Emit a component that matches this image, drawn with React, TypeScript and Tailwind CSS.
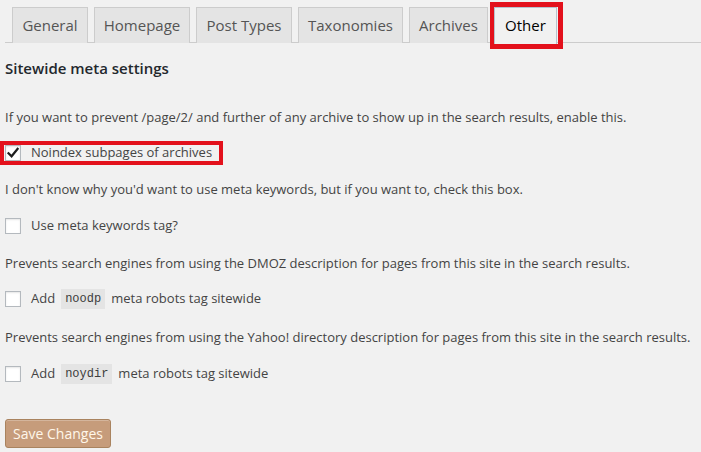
import React from "react";

const tabs = [
  { label: "General", w: "w-[76px]" },
  { label: "Homepage", w: "w-[96px]" },
  { label: "Post Types", w: "w-[96px]" },
  { label: "Taxonomies", w: "w-[105px]" },
  { label: "Archives", w: "w-[79px]" },
];

function Box({ checked }: { checked?: boolean }) {
  return (
    <span className="w-[16px] h-[16px] border border-[#b4b9be] bg-white shadow-[inset_0_1px_2px_rgba(0,0,0,0.1)] flex items-center justify-center shrink-0">
      {checked && (
        <svg width="14" height="14" viewBox="0 0 14 14">
          <path d="M2.5 7.2 L5.6 10.3 L11.6 2.8" fill="none" stroke="#1e1e1e" strokeWidth="2.2" strokeLinecap="square" />
        </svg>
      )}
    </span>
  );
}

function Code({ children }: { children: React.ReactNode }) {
  return (
    <code className="mx-[6px] px-[4px] h-[20px] leading-[20px] inline-block bg-[#e4e4e4] text-[12px] text-[#3c3c3c] font-['Liberation_Mono','DejaVu_Sans_Mono',monospace]">
      {children}
    </code>
  );
}

export default function App() {
  return (
    <div className="relative w-[701px] h-[452px] overflow-hidden bg-[#f1f1f1] text-[#444] font-['Open_Sans','Noto_Sans',sans-serif]">
      <div className="ml-[5px] pt-[7px] pl-[7px] flex items-start gap-[6px] border-b border-[#ccc] h-[43px]">
        {tabs.map((t) => (
          <div
            key={t.label}
            className={`${t.w} h-[36px] border border-b-0 border-[#ccc] bg-[#e4e4e4] text-[#555] text-[15px] flex items-center justify-center`}
          >
            {t.label}
          </div>
        ))}
        <div className="w-[63px] h-[37px] pb-[1px] border border-b-0 border-[#b7c3ce] bg-[#f1f1f1] text-[#000] text-[15px] flex items-center justify-center relative z-10">
          Other
        </div>
      </div>

      <div className="px-[5px]">
        <h3 className="mt-[15px] h-[20px] leading-[20px] text-[15px] font-semibold text-[#23282d]">
          Sitewide meta settings
        </h3>
        <p className="mt-[29px] h-[20px] leading-[20px] text-[13px]">
          If you want to prevent /page/2/ and further of any archive to show up in the search results, enable this.
        </p>
        <label className="mt-[16px] h-[20px] flex items-center gap-[10px] text-[13px]">
          <Box checked />
          <span>Noindex subpages of archives</span>
        </label>
        <p className="mt-[16px] h-[20px] leading-[20px] text-[13px]">
          I don't know why you'd want to use meta keywords, but if you want to, check this box.
        </p>
        <label className="mt-[17px] h-[20px] flex items-center gap-[10px] text-[13px]">
          <Box />
          <span>Use meta keywords tag?</span>
        </label>
        <p className="mt-[17px] h-[20px] leading-[20px] text-[13px]">
          Prevents search engines from using the DMOZ description for pages from this site in the search results.
        </p>
        <label className="mt-[16px] h-[20px] flex items-center gap-[10px] text-[13px]">
          <Box />
          <span className="flex items-center">
            Add<Code>noodp</Code>meta robots tag sitewide
          </span>
        </label>
        <p className="mt-[18px] h-[20px] leading-[20px] text-[13px]">
          Prevents search engines from using the Yahoo! directory description for pages from this site in the search results.
        </p>
        <label className="mt-[17px] h-[20px] flex items-center gap-[10px] text-[13px]">
          <Box />
          <span className="flex items-center">
            Add<Code>noydir</Code>meta robots tag sitewide
          </span>
        </label>
        <button className="mt-[35px] w-[106px] h-[29px] rounded-[3px] border border-[#a9835f] bg-[#c69c7b] text-[#fff7ea] text-[14px] shadow-[inset_0_1px_0_rgba(255,255,255,0.25)] flex items-center justify-center">
          Save Changes
        </button>
      </div>

      <div className="absolute left-[490px] top-[2px] w-[73px] h-[47px] border-[5px] border-[#e3111c]" />
      <div className="absolute left-0 top-[141px] w-[223px] h-[24px] border-[4px] border-[#e3111c]" />
    </div>
  );
}
